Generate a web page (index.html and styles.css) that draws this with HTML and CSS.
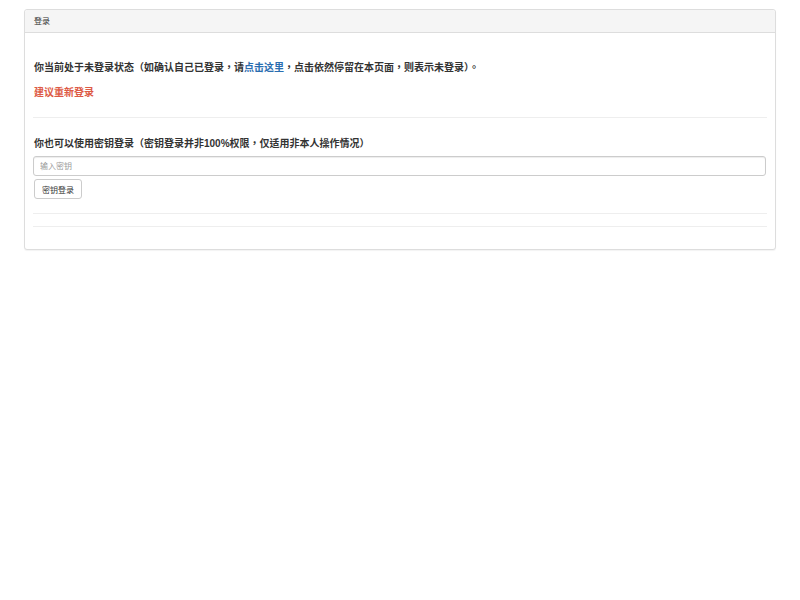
FILE: index.html
```html
<!DOCTYPE html>
<html lang="zh-CN">
<head>
    <meta charset="UTF-8">
    <title>登录</title>
    <link rel="stylesheet" href="styles.css">
</head>
<body>
    <div class="panel">
        <div class="panel-heading">登录</div>
        <div class="panel-body">
            <p class="notice">你当前处于未登录状态（如确认自己已登录，请<a href="#">点击这里</a>，点击依然停留在本页面，则表示未登录）。</p>
            <p class="relogin">建议重新登录</p>
            <hr>
            <p class="key-title">你也可以使用密钥登录（密钥登录并非100%权限，仅适用非本人操作情况）</p>
            <form class="key-form">
                <input type="text" class="key-input" placeholder="输入密钥">
                <button type="submit" class="btn">密钥登录</button>
            </form>
            <hr class="hr-first">
            <hr class="hr-last">
        </div>
    </div>
</body>
</html>
```

FILE: styles.css
```css
body { margin: 0; padding: 9px 24px; background: #fff; color: #333; font-family: "Liberation Sans", "Noto Sans CJK TC", sans-serif; font-feature-settings: "locl" 0; }
.panel { border: 1px solid #ddd; border-radius: 3px; background: #fff; box-shadow: 0 1px 1px rgba(0,0,0,.05); }
.panel-heading { background: #f5f5f5; border-bottom: 1px solid #ddd; padding: 6px 9px 5px; font-size: 8px; line-height: 11px; border-radius: 3px 3px 0 0; }
.panel-body { padding: 9px; }
p { margin: 0; font-size: 10px; line-height: 14px; font-weight: bold; }
.notice { margin-top: 19px; }
.notice a { color: #2a6db0; text-decoration: none; }
.relogin { margin-top: 11px; color: #dd5a45; }
hr { border: 0; border-top: 1px solid #eee; margin: 17px -1px 0; }
.key-title { margin-top: 19px; }
.key-form { margin-top: 5px; }
.key-input { display: block; box-sizing: border-box; width: calc(100% + 1px); margin-left: -1px; height: 20px; padding: 2px 6px; border: 1px solid #ccc; border-radius: 3px; font-size: 8px; font-family: inherit; color: #555; box-shadow: inset 0 1px 1px rgba(0,0,0,.075); }
.key-input::placeholder { color: #999; }
.btn { display: block; margin-top: 3px; height: 20px; padding: 0 7px; background: #fff; border: 1px solid #ccc; border-radius: 3px; font-size: 8px; font-family: inherit; color: #333; cursor: pointer; }
.hr-first { margin-top: 14px; }
.hr-last { margin-top: 12px; margin-bottom: 13px; }
```
